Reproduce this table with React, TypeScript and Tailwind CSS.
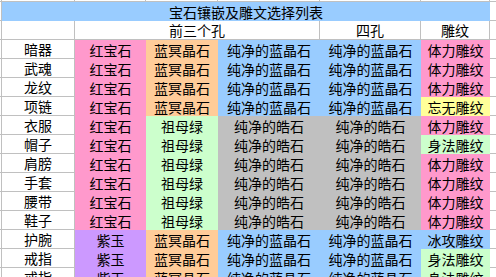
import React from "react";

type Fill = "pink" | "peach" | "blue" | "green" | "gray" | "purple" | "yellow";

const fills: Record<Fill, string> = {
  pink: "bg-[#ff99cc]",
  peach: "bg-[#ffcc99]",
  blue: "bg-[#99ccff]",
  green: "bg-[#ccffcc]",
  gray: "bg-[#c0c0c0]",
  purple: "bg-[#cc99ff]",
  yellow: "bg-[#ffff99]",
};

const cell = "flex items-center justify-center whitespace-nowrap";
const white = "bg-white border-r border-b border-[#c0c0c0]";

// gem per slot: [text, fill]
type Slot = [string, Fill];

const red: Slot = ["红宝石", "pink"];
const jade: Slot = ["紫玉", "purple"];
const sapph: Slot = ["蓝冥晶石", "peach"];
const emerald: Slot = ["祖母绿", "green"];
const blueCrystal: Slot = ["纯净的蓝晶石", "blue"];
const zircon: Slot = ["纯净的皓石", "gray"];

const stamina: Slot = ["体力雕纹", "pink"];
const agility: Slot = ["身法雕纹", "green"];

const rows: { name: string; slots: Slot[] }[] = [
  { name: "暗器", slots: [red, sapph, blueCrystal, blueCrystal, stamina] },
  { name: "武魂", slots: [red, sapph, blueCrystal, blueCrystal, stamina] },
  { name: "龙纹", slots: [red, sapph, blueCrystal, blueCrystal, stamina] },
  { name: "项链", slots: [red, sapph, blueCrystal, blueCrystal, ["忘无雕纹", "yellow"]] },
  { name: "衣服", slots: [red, emerald, zircon, zircon, stamina] },
  { name: "帽子", slots: [red, emerald, zircon, zircon, agility] },
  { name: "肩膀", slots: [red, emerald, zircon, zircon, stamina] },
  { name: "手套", slots: [red, emerald, zircon, zircon, stamina] },
  { name: "腰带", slots: [red, emerald, zircon, zircon, stamina] },
  { name: "鞋子", slots: [red, emerald, zircon, zircon, stamina] },
  { name: "护腕", slots: [jade, sapph, blueCrystal, blueCrystal, ["冰攻雕纹", "blue"]] },
  { name: "戒指", slots: [jade, sapph, blueCrystal, blueCrystal, agility] },
  { name: "戒指", slots: [jade, sapph, blueCrystal, blueCrystal, agility] },
];

export default function App() {
  return (
    <div className="h-[277px] w-[496px] overflow-hidden bg-white text-[14px] leading-none text-black [font-family:'Noto_Sans_CJK_SC','Noto_Sans',sans-serif]">
      <div className="grid grid-cols-[2px_73px_71px_72px_102px_101px_69px_1fr] grid-rows-[2px] auto-rows-[19px]">
        {/* sliver of the row above */}
        {Array.from({ length: 7 }).map((_, i) => (
          <div key={i} className={white} />
        ))}
        <div className="bg-white border-b border-[#c0c0c0]" />

        {/* title */}
        <div className={white} />
        <div className={`${cell} col-span-6 bg-[#99ccff]`}>宝石镶嵌及雕文选择列表</div>
        <div className="bg-white border-b border-[#c0c0c0]" />

        {/* sub header */}
        <div className={white} />
        <div className={white} />
        <div className={`${cell} ${white} col-span-3`}>前三个孔</div>
        <div className={`${cell} ${white}`}>四孔</div>
        <div className={`${cell} ${white}`}>雕纹</div>
        <div className="bg-white border-b border-[#c0c0c0]" />

        {rows.map((r, ri) => (
          <React.Fragment key={ri}>
            <div className={white} />
            <div className={`${cell} ${white}`}>{r.name}</div>
            {r.slots.map(([text, fill], si) => (
              <div key={si} className={`${cell} ${fills[fill]}`}>
                {text}
              </div>
            ))}
            <div className="bg-white border-b border-[#c0c0c0]" />
          </React.Fragment>
        ))}
      </div>
    </div>
  );
}
